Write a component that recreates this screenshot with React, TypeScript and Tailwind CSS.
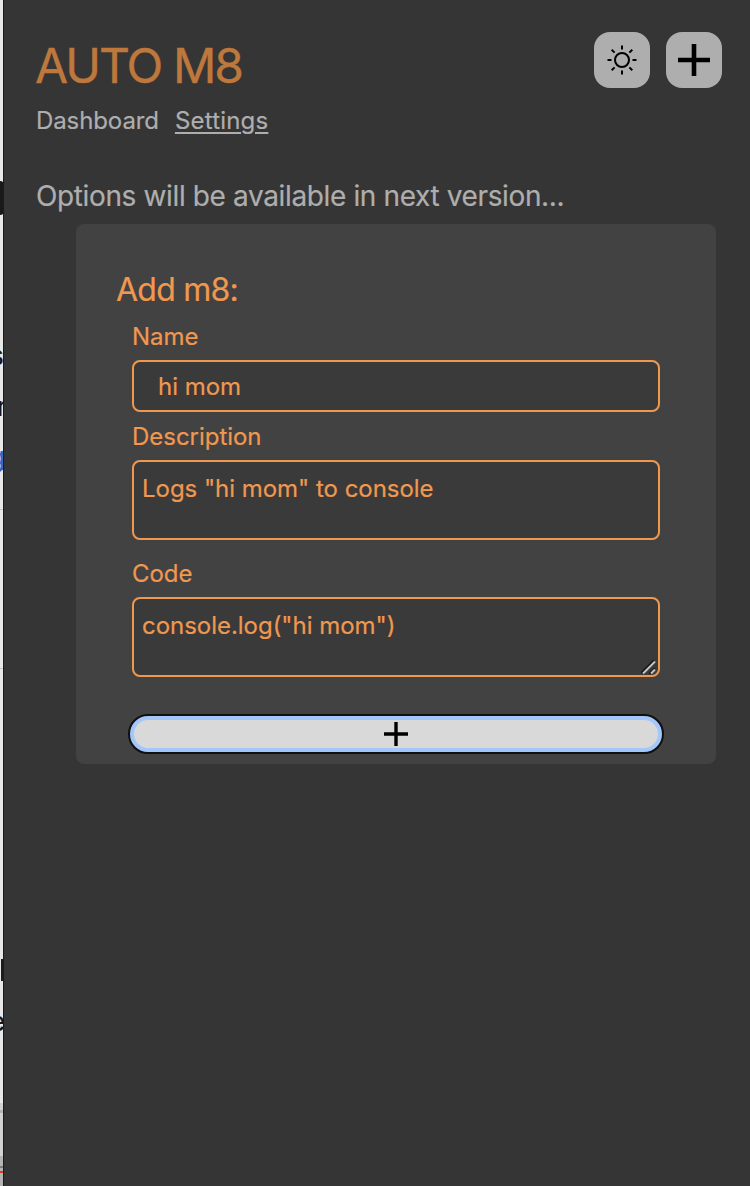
import type { ReactNode } from "react";

function PageSliver() {
  return (
    <div
      aria-hidden="true"
      className="flex h-full w-1 shrink-0 flex-col items-start overflow-hidden border-r border-[#1b1b1b] bg-[#e8e8e8] text-[26px] leading-8 text-[#16171a]"
    >
      <div className="mt-[181px] h-[34px] w-1 shrink-0 rounded-r-[4px] bg-[#19191c]" />
      <div className="mt-[125px] -ml-[10px] h-8 shrink-0">s</div>
      <div className="mt-[19px] -ml-[3px] h-8 shrink-0">r</div>
      <div className="mt-[18px] -ml-[11px] h-[29px] shrink-0 border-b-2 border-[#3465c9] text-[#3465c9]">g</div>
      <div className="mt-[39px] h-[160px] w-full shrink-0 border-y border-[#c4c4c4]" />
      <div className="mt-[290px] ml-[1px] h-[22px] w-[3px] shrink-0 bg-[#1c1c1e]" />
      <div className="mt-[25px] -ml-[10px] h-8 shrink-0">e</div>
      <div className="mt-[65px] flex w-full flex-1 flex-col bg-[#d2d2d2] pt-[7px]">
        <div className="h-[3px] bg-[#b4b4b4]" />
        <div className="mt-[43px] flex flex-1 flex-col gap-[3px] bg-[#b4b4b4] pt-[10px]">
          <div className="h-[2px] bg-[#7d7d7d]" />
          <div className="h-[2px] bg-[#df3b30]" />
        </div>
      </div>
    </div>
  );
}

function IconButton({ label, children }: { label: string; children: ReactNode }) {
  return (
    <button aria-label={label} className="flex size-14 items-center justify-center rounded-2xl bg-[#aeaeae]">
      {children}
    </button>
  );
}

function SunIcon() {
  return (
    <svg width="32" height="32" viewBox="0 0 32 32" fill="none" stroke="#000" strokeWidth="2">
      <circle cx="16" cy="16" r="7" />
      <path d="M16 1.5v4M16 26.5v4M1.5 16h4M26.5 16h4M5.7 5.7l2.9 2.9M23.4 23.4l2.9 2.9M5.7 26.3l2.9-2.9M23.4 8.6l2.9-2.9" />
    </svg>
  );
}

const label = "block h-10 pt-px text-[24px] leading-8 tracking-[-0.03px]";
const field =
  "block w-full rounded-lg border-2 border-[#f0984f] bg-[#3a3a3a] text-[24px] tracking-[-0.03px] text-[#f0984f] outline-none [-webkit-text-stroke:0.2px_currentColor]";
const area = "h-20 resize-none overflow-hidden px-2 pt-[11px] leading-8";

export default function App() {
  return (
    <div className="flex h-[1186px] w-[750px] overflow-hidden bg-[#353535] font-['Inter',sans-serif] [-webkit-text-stroke:0.2px_currentColor]">
      <PageSliver />
      <main className="flex-1">
        <header className="flex h-[144px] justify-between pt-8 pr-7 pl-8">
          <div>
            <h1 className="-ml-px h-[68px] text-[48px] leading-[67px] tracking-[-1.95px] whitespace-nowrap text-[#bf783c] [-webkit-text-stroke:0.4px_currentColor]">
              AUTO M8
            </h1>
            <nav className="flex gap-4 text-[24px] leading-[42px] text-[#aeaeae]">
              <a href="#dashboard" className="tracking-[-0.1px]">Dashboard</a>
              <a href="#settings" className="tracking-[0.2px] underline decoration-2 underline-offset-[3px]">Settings</a>
            </nav>
          </div>
          <div className="flex gap-4">
            <IconButton label="Toggle theme"><SunIcon /></IconButton>
            <IconButton label="Add">
              <svg width="32" height="32" viewBox="0 0 32 32" stroke="#000" strokeWidth="4.6">
                <path d="M16 0v32M0 16h32" />
              </svg>
            </IconButton>
          </div>
        </header>

        <p className="h-20 pt-8 pl-8 text-[28px] leading-[41px] tracking-[-0.37px] whitespace-nowrap text-[#aeaeae]">
          Options will be available in next version...
        </p>

        <form className="ml-[72px] h-[540px] w-[640px] rounded-lg bg-[#424242] px-10 pt-11 text-[#f0984f]" onSubmit={(e) => e.preventDefault()}>
          <h2 className="h-[52px] text-[32px] leading-[43px] tracking-[-0.75px]">Add m8:</h2>
          <div className="px-4">
            <label htmlFor="name" className={label}>Name</label>
            <input id="name" defaultValue="hi mom" className={`${field} h-[52px] px-6`} />
            <label htmlFor="description" className={`${label} mt-2`}>Description</label>
            <textarea id="description" spellCheck={false} defaultValue={'Logs "hi mom" to console'} className={`${field} ${area}`} />
            <label htmlFor="code" className={`${label} mt-[17px]`}>Code</label>
            <div className="relative">
              <textarea id="code" spellCheck={false} defaultValue={'console.log("hi mom")'} className={`${field} ${area}`} />
              <svg className="absolute right-[3px] bottom-[2px]" width="16" height="16" viewBox="0 0 16 16" fill="none">
                <path d="M0.5 14L13 1.5M8.5 14.5L14 9.5" stroke="#111" strokeWidth="2" />
                <path d="M2 14.5L14 2.5M10 14.5L14 10.5" stroke="#c4c4c4" strokeWidth="2" />
              </svg>
            </div>
          </div>
          <button aria-label="Add m8" className="mt-[37px] ml-3 flex h-10 w-[536px] items-center justify-center rounded-full border-2 border-[#101010] bg-[#a3c6fb] p-1">
            <span className="flex h-full w-full items-center justify-center rounded-full bg-[#d9d9d9]">
              <svg width="24" height="24" viewBox="0 0 24 24" stroke="#000" strokeWidth="3.4">
                <path d="M12 0v24M0 12h24" />
              </svg>
            </span>
          </button>
        </form>
      </main>
    </div>
  );
}
